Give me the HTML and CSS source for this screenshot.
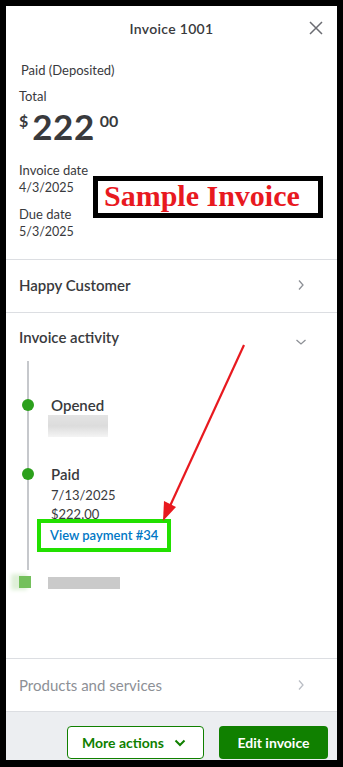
FILE: index.html
```html
<!DOCTYPE html>
<html lang="en">

<head>
  <meta charset="UTF-8">
  <title>Invoice 1001</title>
  <link rel="stylesheet" href="styles.css">
</head>

<body>
  <div class="panel">
    <div class="header">
      <span class="title">Invoice 1001</span>
      <svg class="close" width="14" height="14" viewBox="0 0 14 14">
        <path d="M1 1L13 13M13 1L1 13" stroke="#6b6c72" stroke-width="1.5" fill="none" />
      </svg>
    </div>

    <div class="summary">
      <div class="status">Paid (Deposited)</div>
      <div class="label">Total</div>
      <div class="amount">
        <span class="cur">$</span>
        <span class="whole">222</span>
        <span class="cents">00</span>
      </div>
      <div class="label mt">Invoice date</div>
      <div class="value">4/3/2025</div>
      <div class="label mt2">Due date</div>
      <div class="value">5/3/2025</div>
    </div>

    <div class="row first">
      <span>Happy Customer</span>
      <svg width="8" height="12" viewBox="0 0 8 12">
        <path d="M2 1.5L6 6L2 10.5" stroke="#8d9096" stroke-width="1.3" fill="none" />
      </svg>
    </div>

    <div class="row open">
      <span>Invoice activity</span>
      <svg width="12" height="8" viewBox="0 0 12 8">
        <path d="M1.5 2L6 6L10.5 2" stroke="#8d9096" stroke-width="1.3" fill="none" />
      </svg>
    </div>

    <div class="timeline">
      <div class="event">
        <span class="dot"></span>
        <div>
          <div class="ev-title">Opened</div>
          <div class="blur big" style="width: 60px"></div>
        </div>
      </div>
      <div class="event">
        <span class="dot"></span>
        <div>
          <div class="ev-title">Paid</div>
          <div class="ev-line">7/13/2025</div>
          <div class="ev-line">$222.00</div>
          <a class="ev-link" href="#">View payment #34</a>
        </div>
      </div>
      <div class="event last">
        <span class="dot faded"></span>
        <div>
          <div class="blur" style="width: 72px"></div>
        </div>
      </div>
    </div>

    <div class="row muted">
      <span>Products and services</span>
      <svg width="8" height="12" viewBox="0 0 8 12">
        <path d="M2 1.5L6 6L2 10.5" stroke="#babec5" stroke-width="1.3" fill="none" />
      </svg>
    </div>

    <div class="footer">
      <button class="btn outline">More actions
        <svg width="12" height="8" viewBox="0 0 12 8">
          <path d="M1.5 1.5L6 6L10.5 1.5" stroke="#108000" stroke-width="2" fill="none" />
        </svg>
      </button>
      <button class="btn solid">Edit invoice</button>
    </div>
  </div>

  <!-- annotations drawn over the screenshot -->
  <div class="stamp">Sample Invoice</div>
  <svg class="arrow" width="343" height="767" viewBox="0 0 343 767">
    <path d="M244 345L170 506" stroke="#e8191f" stroke-width="2.2" fill="none" />
    <path d="M163 521L164 501L176 507Z" fill="#e8191f" />
  </svg>
</body>

</html>
```

FILE: styles.css
```css
body {
  margin: 0;
  background-color: #000;
  font-family: Lato, "Open Sans", sans-serif;
  color: #393a3d;
}

.panel {
  margin: 6px 6px 7px 6px;
  height: 754px;
  background-color: #fff;
  display: flex;
  flex-direction: column;
}

.header {
  height: 44px;
  display: flex;
  align-items: center;
  justify-content: center;
  position: relative;
}

.title {
  font-size: 14px;
  font-weight: 600;
  letter-spacing: 0.3px;
}

.close {
  position: absolute;
  right: 14px;
  top: 15px;
}

.summary {
  padding: 12px 13px 0 13px;
  height: 210px;
  flex-shrink: 0;
  box-sizing: border-box;
  border-bottom: 1px solid #dcdee2;
  font-size: 13px;
}

.status {
  padding-left: 2px;
  line-height: 16px;
}

.label {
  line-height: 16px;
  margin-top: 10px;
}

.label.mt {
  margin-top: 16px;
}

.label.mt2 {
  margin-top: 10px;
}

.value {
  line-height: 16px;
  margin-top: 2px;
  font-size: 12.5px;
}

.amount {
  display: flex;
  align-items: flex-start;
  font-weight: 700;
  height: 40px;
  margin-top: 2px;
}

.cur {
  font-size: 16px;
  margin-top: 5px;
  margin-right: 4px;
}

.whole {
  font-size: 35px;
  line-height: 40px;
  letter-spacing: 0.5px;
}

.cents {
  font-size: 16px;
  margin-top: 5px;
  margin-left: 5px;
}

.row {
  height: 53px;
  flex-shrink: 0;
  display: flex;
  align-items: center;
  justify-content: space-between;
  padding: 0 32px 0 13px;
  border-bottom: 1px solid #dcdee2;
  font-size: 15px;
  font-weight: 600;
  box-sizing: border-box;
}

.row.first {
  height: 53px;
  padding-bottom: 3px;
}

.row.open {
  border-bottom: none;
  height: 48px;
  padding-right: 30px;
  align-items: flex-end;
  padding-bottom: 15px;
}

.row.muted {
  color: #8d9096;
  font-weight: 400;
  border-top: 1px solid #dcdee2;
  height: 54px;
}

.timeline {
  flex: 1;
  padding: 0 0 0 16px;
  position: relative;
}

.timeline::before {
  content: "";
  position: absolute;
  left: 21px;
  top: 0;
  height: 209px;
  width: 2px;
  background-color: #c6c8cc;
}

.event {
  display: grid;
  grid-template-columns: 13px 1fr;
  column-gap: 16px;
  position: relative;
}

.event:first-child {
  margin-top: 34px;
}

.event + .event {
  margin-top: 27px;
}

.event.last {
  margin-top: 25px;
}

.dot {
  width: 12px;
  height: 12px;
  border-radius: 50%;
  background-color: #2ca01c;
  margin-top: 4px;
}

.dot.faded {
  background-color: #74c05c;
  box-shadow: -6px 0 4px 2px #dff0d8;
  margin: -1px 0 0 -3px;
  width: 12px;
  height: 12px;
  border-radius: 0;
}

.ev-title {
  font-size: 15px;
  font-weight: 600;
  line-height: 20px;
}

.ev-line {
  font-size: 13px;
  line-height: 19px;
  margin-top: 2px;
}

.ev-line + .ev-line {
  margin-top: 0;
}

.ev-link {
  display: inline-block;
  margin: -7px 0 0 -14px;
  padding: 4px 9px;
  line-height: 17px;
  border: 4px solid #22e000;
  background-color: #fff;
  color: #0077c5;
  font-size: 13px;
  font-weight: 600;
  text-decoration: none;
}

.blur {
  height: 12px;
  margin-left: -3px;
  background-color: #cacaca;
  filter: blur(0.6px);
}

.blur.big {
  height: 22px;
  background: linear-gradient(180deg, #e4e4e4 0, #dcdcdc 50%, #f4f4f4 100%);
}

.footer {
  height: 47px;
  flex-shrink: 0;
  background-color: #eceef1;
  display: flex;
  justify-content: flex-end;
  align-items: flex-end;
  gap: 15px;
  padding: 0 9px 1px 0;
}

.btn {
  height: 33px;
  border-radius: 4px;
  font-family: Lato, "Open Sans", sans-serif;
  font-size: 14px;
  font-weight: 700;
  cursor: pointer;
  display: flex;
  align-items: center;
  gap: 10px;
}

.btn.outline {
  width: 137px;
  padding: 0 0 0 14px;
  background-color: #fff;
  border: 1px solid #108000;
  color: #108000;
}

.btn.solid {
  width: 109px;
  justify-content: center;
  background-color: #108000;
  border: none;
  color: #fff;
}

.stamp {
  position: absolute;
  left: 93px;
  top: 176px;
  width: 214px;
  height: 32px;
  border: 5px solid #000;
  background-color: #fff;
  color: #e8191f;
  font-family: "Liberation Serif", serif;
  font-weight: 700;
  font-size: 30px;
  line-height: 30px;
  padding-left: 6px;
}

.arrow {
  position: absolute;
  left: 0;
  top: 0;
  pointer-events: none;
}
```
